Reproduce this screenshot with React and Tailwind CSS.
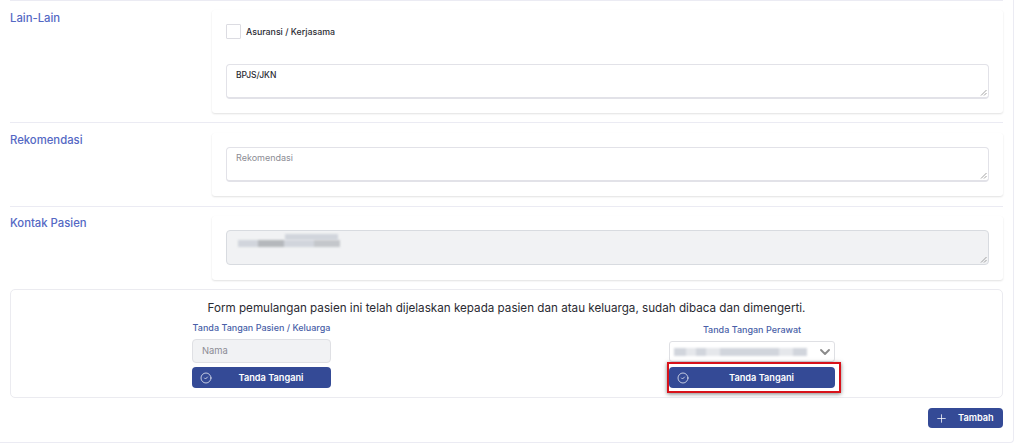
import React from 'react'
import { CircleCheck, ChevronDown, Plus } from 'lucide-react'

const font = { fontFamily: 'Inter, "Open Sans", sans-serif' }

const blurA = [
  ['w-[6px]', 'bg-gray-300'], ['w-[14px]', 'bg-gray-300'], ['w-[26px]', 'bg-[#b5b8bc]'], ['w-[6px]', 'bg-gray-300'],
  ['w-[10px]', 'bg-gray-300'], ['w-[14px]', 'bg-gray-300'], ['w-[26px]', 'bg-[#c4c7cb]'],
]

const blurB = [
  ['w-[12px]', 'bg-gray-300'], ['w-[10px]', 'bg-gray-200'], ['w-[10px]', 'bg-gray-300'], ['w-[14px]', 'bg-gray-200'],
  ['w-[20px]', 'bg-gray-300'], ['w-[16px]', 'bg-gray-300'], ['w-[13px]', 'bg-gray-300'], ['w-[10px]', 'bg-gray-300'],
  ['w-[14px]', 'bg-gray-200'], ['w-[14px]', 'bg-gray-300'],
]

const ResizeGrip = () => (
  <svg className="absolute right-[1px] bottom-[1px]" width="7" height="7" viewBox="0 0 7 7">
    <path d="M6.5 1 1 6.5M6.5 4 4 6.5" stroke="#8a8a8a" strokeWidth="0.8" fill="none" />
  </svg>
)

const Section = ({ title, labelClass = '', cardClass = '', children }) => (
  <div className="border-t border-[#ebebf3] py-[9px] flex">
    <div className={`w-[202px] text-[11.3px] leading-[16px] font-medium text-[#5468c4] ${labelClass}`}>{title}</div>
    <div className={`flex-1 rounded-[3px] bg-white shadow-[0_1px_2px_rgba(0,0,0,0.12)] px-[14px] py-[14px] ${cardClass}`}>{children}</div>
  </div>
)

const SignButton = () => (
  <button className="relative flex items-center justify-center w-full h-[21px] pl-[19px] rounded-[4px] bg-[#344a96] text-white text-[9.2px] font-semibold">
    <CircleCheck size={12} strokeWidth={1.4} className="absolute left-[8px]" />
    Tanda Tangani
  </button>
)

const App = () => {
  return (
    <div style={font} className="h-[443px] overflow-hidden bg-white">
      <div className="w-[1014px] h-[443px] border-r border-b border-[#ebebf3] rounded-br-[4px] px-[10px]">
        <Section title="Lain-Lain">
          <div className="flex items-center gap-[5px] h-[15px]">
            <div className="w-[15px] h-[15px] border border-[#dcdce2] rounded-[1px]"></div>
            <span className="text-[8.8px] font-medium text-[#2b2b33]">Asuransi / Kerjasama</span>
          </div>
          <div className="relative mt-[25px] h-[35px] border border-[#e2e2e8] border-b-2 rounded-[4px] px-[9px] py-[4px] text-[8.5px] leading-[12px] font-medium text-[#2b2b33]">
            BPJS/JKN
            <ResizeGrip />
          </div>
        </Section>
        <Section title="Rekomendasi" cardClass="my-[1px]">
          <div className="relative h-[35px] border border-[#e2e2e8] border-b-2 rounded-[4px] px-[9px] py-[4px] text-[9px] leading-[12px] text-[#8c8c94]">
            Rekomendasi
            <ResizeGrip />
          </div>
        </Section>
        <Section title="Kontak Pasien" labelClass="-mt-[1px]" cardClass="pb-[15px]">
          <div className="relative h-[35px] border border-[#d8dbe0] rounded-[4px] bg-[#f1f2f4] px-[11px] pt-[3px]">
            <div className="flex h-[6px] blur-[0.8px]">
              <div className="w-[47px]"></div>
              <div className="w-[53px] bg-gray-300"></div>
            </div>
            <div className="flex h-[7px] blur-[0.8px]">
              {blurA.map(([w, c], i) => <div key={i} className={`${w} ${c}`}></div>)}
            </div>
            <ResizeGrip />
          </div>
        </Section>

        <div className="border border-[#ebebf0] rounded-[5px] h-[109px] pt-[9px]">
          <div className="text-center text-[11.67px] leading-[18px] text-[#2b2b33]">
            Form pemulangan pasien ini telah dijelaskan kepada pasien dan atau keluarga, sudah dibaca dan dimengerti.
          </div>
          <div className="flex pl-[181px] gap-[338px]">
            <div className="w-[139px]">
              <div className="text-center text-[9px] leading-[13px] font-medium text-[#4a5fa8] mt-[4px] whitespace-nowrap">Tanda Tangan Pasien / Keluarga</div>
              <div className="mt-[5px] h-[24px] rounded-[4px] border border-[#dfe0e4] bg-[#f1f2f4] px-[9px] flex items-center text-[9.4px] text-[#8c8c94]">Nama</div>
              <div className="mt-[4px]"><SignButton /></div>
            </div>
            <div className="w-[166px]">
              <div className="text-center text-[9px] leading-[13px] font-medium text-[#4a5fa8] mt-[6px]">Tanda Tangan Perawat</div>
              <div className="mt-[5px] h-[21px] rounded-[3px] border border-[#dfe0e4] flex items-center justify-between pl-[4px] pr-[1px]">
                <div className="flex h-[8px] blur-[1px]">
                  {blurB.map(([w, c], i) => <div key={i} className={`${w} ${c}`}></div>)}
                </div>
                <ChevronDown size={16} strokeWidth={2.8} className="text-[#8a8a8a]" />
              </div>
              <div className="relative mt-[5px]">
                <SignButton />
                <div className="absolute -left-[2px] -top-[5px] -right-[6px] -bottom-[5px] border-2 border-[#d8121a] shadow-[0_1px_4px_rgba(0,0,0,0.5)]"></div>
              </div>
            </div>
          </div>
        </div>

        <div className="flex justify-end mt-[10px]">
          <button className="flex items-center w-[75px] h-[20px] rounded-[4px] bg-[#344a96] text-white text-[9.2px] font-semibold pl-[7px] gap-[10px]">
            <Plus size={13} strokeWidth={1.4} />
            Tambah
          </button>
        </div>
      </div>
    </div>
  )
}

export default App
